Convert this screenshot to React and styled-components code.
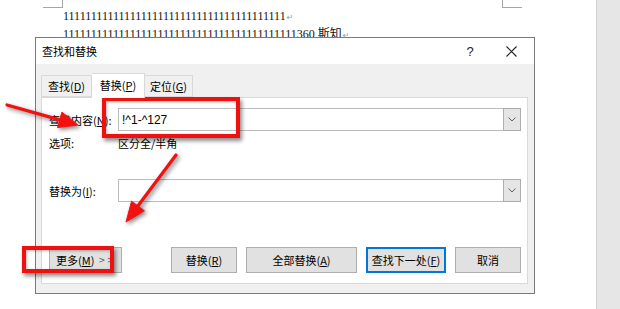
import React from 'react';
import styled, { createGlobalStyle } from 'styled-components';

const GlobalStyle = createGlobalStyle`
  html, body {
    margin: 0;
    padding: 0;
    background: #fff;
  }
  #root {
    width: 620px;
    height: 309px;
    overflow: hidden;
  }
`;

const uiFont = `"Noto Sans CJK SC", "Noto Sans", sans-serif`;

const Screen = styled.div`
  position: relative;
  display: flex;
  width: 620px;
  height: 309px;
  overflow: hidden;
  font-family: ${uiFont};
`;

const Page = styled.div`
  flex: 1;
  background: #fff;
`;

const Sidebar = styled.div`
  width: 23px;
  background: #e6e6e6;
  border-left: 1px solid #d2d2d2;
`;

const MarkRow = styled.div`
  display: flex;
  height: 8px;
  padding-left: 43px;
`;

const Mark = styled.div`
  width: 19px;
  height: 7px;
  border-bottom: 1px solid #a6a6a6;
  ${({ $side }) =>
    $side === 'left'
      ? 'border-right: 1px solid #a6a6a6;'
      : 'border-left: 1px solid #a6a6a6; margin-left: 439px;'}
`;

const DocText = styled.div`
  padding-left: 63px;
  font-family: "Liberation Serif", "Noto Sans CJK SC", serif;
  font-size: 12px;
  line-height: 16px;
  color: #111;
  white-space: nowrap;
`;

const DocLine = styled.div`
  display: flex;
  align-items: baseline;
`;

const ParaMark = styled.span`
  color: #9a9a9a;
  font-family: "DejaVu Sans", sans-serif;
  font-size: 8px;
  margin-left: 1px;
`;

const Dialog = styled.div`
  position: absolute;
  left: 35px;
  top: 37px;
  width: 500px;
  height: 257px;
  box-sizing: border-box;
  border: 1px solid #7a7a7a;
  display: flex;
  flex-direction: column;
  background: #f0f0f0;
  font-size: 11px;
  color: #000;
`;

const TitleBar = styled.div`
  height: 26px;
  background: #fff;
  display: flex;
  align-items: center;
  padding-left: 6px;
`;

const Title = styled.div`
  flex: 1;
  font-size: 11px;
`;

const TitleButton = styled.div`
  width: ${({ $w }) => $w}px;
  height: 26px;
  display: flex;
  align-items: center;
  justify-content: center;
  font-family: "Liberation Sans", sans-serif;
  font-size: 13px;
  color: #222;
`;

const Body = styled.div`
  flex: 1;
  display: flex;
  flex-direction: column;
  padding: 9px 6px 9px 5px;
`;

const TabRow = styled.div`
  display: flex;
  align-items: flex-end;
  height: 24px;
  position: relative;
  z-index: 1;
`;

const Tab = styled.div`
  box-sizing: border-box;
  height: ${({ $active }) => ($active ? 25 : 22)}px;
  width: ${({ $w }) => $w}px;
  display: flex;
  align-items: center;
  justify-content: center;
  padding-bottom: ${({ $active }) => ($active ? 2 : 0)}px;
  background: ${({ $active }) => ($active ? '#fff' : '#f0f0f0')};
  border: 1px solid #d9d9d9;
  border-bottom: ${({ $active }) => ($active ? 'none' : '1px solid #d9d9d9')};
  margin-bottom: ${({ $active }) => ($active ? -1 : 0)}px;
  & + & {
    border-left: ${({ $active }) => ($active ? '1px solid #d9d9d9' : 'none')};
  }
`;

const Panel = styled.div`
  flex: 1;
  background: #fff;
  border: 1px solid #d9d9d9;
  display: flex;
  flex-direction: column;
  padding: 10px 6px 10px 7px;
`;

const FieldRow = styled.div`
  display: grid;
  grid-template-columns: 69px 1fr;
  align-items: center;
  margin-top: ${({ $mt }) => $mt || 0}px;
`;

const Label = styled.div`
  line-height: 16px;
`;

const Combo = styled.div`
  display: flex;
  height: 23px;
  box-sizing: border-box;
  border: 1px solid #bcbcbc;
  background: #fff;
`;

const ComboText = styled.div`
  flex: 1;
  padding-left: 3px;
  display: flex;
  align-items: center;
  font-family: "Liberation Sans", sans-serif;
  font-size: 12px;
`;

const ComboArrow = styled.div`
  width: 16px;
  margin: -1px -1px -1px 0;
  border: 1px solid #adadad;
  background: #e5e5e5;
  display: flex;
  align-items: center;
  justify-content: center;
`;

const ButtonRow = styled.div`
  margin-top: auto;
  display: flex;
  align-items: center;
`;

const ButtonGroup = styled.div`
  margin-left: auto;
  display: flex;
  gap: 9px;
`;

const Button = styled.div`
  box-sizing: border-box;
  width: ${({ $w }) => $w}px;
  height: 26px;
  display: flex;
  align-items: center;
  justify-content: ${({ $start }) => ($start ? 'flex-start' : 'center')};
  padding-left: ${({ $start }) => ($start ? 6 : 0)}px;
  background: #e1e1e1;
  border: 1px solid ${({ $default }) => ($default ? '#0078d7' : '#adadad')};
  box-shadow: ${({ $default }) => ($default ? 'inset 0 0 0 1px #0078d7' : 'none')};
  white-space: nowrap;
`;

const Chevron = styled.span`
  font-family: "DejaVu Sans", sans-serif;
  font-size: 8px;
  color: #555;
  margin-left: ${({ $first }) => ($first ? 4 : 2)}px;
`;

const RedBox = styled.div`
  position: absolute;
  left: ${({ $x }) => $x}px;
  top: ${({ $y }) => $y}px;
  width: ${({ $w }) => $w}px;
  height: ${({ $h }) => $h}px;
  box-sizing: border-box;
  border: 4px solid #f01010;
  box-shadow: 2px 3px 4px rgba(0, 0, 0, 0.45), inset 1px 1px 3px rgba(0, 0, 0, 0.3);
  pointer-events: none;
`;

const Overlay = styled.svg`
  position: absolute;
  left: 0;
  top: 0;
  width: 620px;
  height: 309px;
  pointer-events: none;
  filter: drop-shadow(2px 2px 2px rgba(0, 0, 0, 0.5));
`;

const Key = ({ children }) => <u>{children}</u>;

const ChevronDown = () => (
  <svg width="8" height="5" viewBox="0 0 8 5">
    <path d="M0.5 0.5 L4 4 L7.5 0.5" fill="none" stroke="#606060" strokeWidth="1" />
  </svg>
);

const CloseIcon = () => (
  <svg width="11" height="11" viewBox="0 0 11 11">
    <path d="M0.5 0.5 L10.5 10.5 M10.5 0.5 L0.5 10.5" stroke="#222" strokeWidth="1.1" />
  </svg>
);

const Arrow = ({ x1, y1, x2, y2, len = 18, half = 8 }) => {
  const dx = x2 - x1;
  const dy = y2 - y1;
  const d = Math.hypot(dx, dy);
  const ux = dx / d;
  const uy = dy / d;
  const bx = x2 - ux * len;
  const by = y2 - uy * len;
  const px = -uy * half;
  const py = ux * half;
  return (
    <g fill="#f51010" stroke="#f51010">
      <line x1={x1} y1={y1} x2={bx + ux * 2} y2={by + uy * 2} strokeWidth="3.2" strokeLinecap="round" />
      <polygon points={`${x2},${y2} ${bx + px},${by + py} ${bx - px},${by - py}`} strokeWidth="1" />
    </g>
  );
};

export default function App() {
  return (
    <>
      <GlobalStyle />
      <Screen>
        <Page>
          <MarkRow>
            <Mark $side="left" />
            <Mark $side="right" />
          </MarkRow>
          <DocText>
            <DocLine>
              {'1'.repeat(40)}
              <ParaMark>↵</ParaMark>
            </DocLine>
            <DocLine>
              {'1'.repeat(42)}360 斯知
              <ParaMark>↵</ParaMark>
            </DocLine>
          </DocText>
        </Page>
        <Sidebar />

        <Dialog>
          <TitleBar>
            <Title>查找和替换</Title>
            <TitleButton $w={36}>?</TitleButton>
            <TitleButton $w={46}>
              <CloseIcon />
            </TitleButton>
          </TitleBar>
          <Body>
            <TabRow>
              <Tab $w={51}>
                查找(<Key>D</Key>)
              </Tab>
              <Tab $w={53} $active>
                替换(<Key>P</Key>)
              </Tab>
              <Tab $w={48}>
                定位(<Key>G</Key>)
              </Tab>
            </TabRow>
            <Panel>
              <FieldRow>
                <Label>
                  查找内容(<Key>N</Key>):
                </Label>
                <Combo>
                  <ComboText>!^1-^127</ComboText>
                  <ComboArrow>
                    <ChevronDown />
                  </ComboArrow>
                </Combo>
              </FieldRow>
              <FieldRow $mt={4}>
                <Label>选项:</Label>
                <Label>区分全/半角</Label>
              </FieldRow>
              <FieldRow $mt={28}>
                <Label>
                  替换为(<Key>I</Key>):
                </Label>
                <Combo>
                  <ComboText />
                  <ComboArrow>
                    <ChevronDown />
                  </ComboArrow>
                </Combo>
              </FieldRow>
              <ButtonRow>
                <Button $w={73} $start>
                  更多(<Key>M</Key>)<Chevron $first>&gt;</Chevron>
                  <Chevron>&gt;</Chevron>
                </Button>
                <ButtonGroup>
                  <Button $w={66}>
                    替换(<Key>R</Key>)
                  </Button>
                  <Button $w={111}>
                    全部替换(<Key>A</Key>)
                  </Button>
                  <Button $w={80} $default>
                    查找下一处(<Key>F</Key>)
                  </Button>
                  <Button $w={66}>取消</Button>
                </ButtonGroup>
              </ButtonRow>
            </Panel>
          </Body>
        </Dialog>

        <RedBox $x={102} $y={97} $w={138} $h={41} />
        <RedBox $x={22} $y={246} $w={92} $h={27} />
        <Overlay viewBox="0 0 620 309">
          <Arrow x1={7} y1={105} x2={78} y2={125} len={19} half={8} />
          <Arrow x1={176} y1={155} x2={126} y2={222} len={20} half={8} />
        </Overlay>
      </Screen>
    </>
  );
}
